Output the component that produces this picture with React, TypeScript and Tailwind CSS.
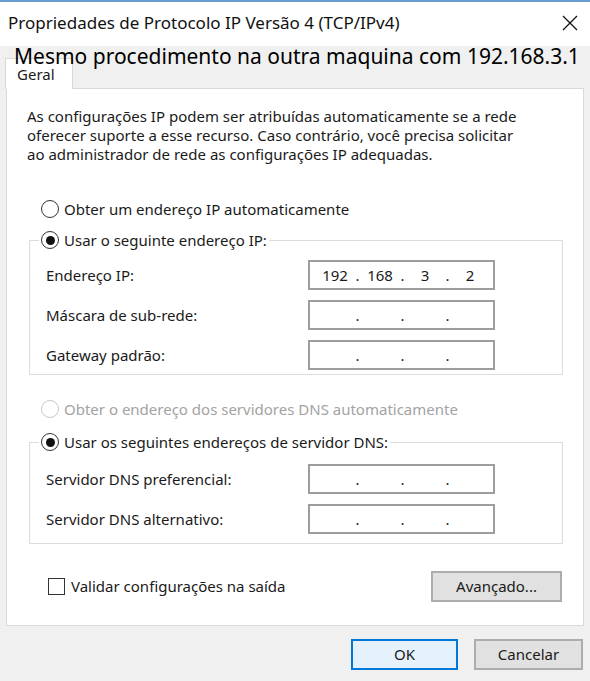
import React from 'react';

const ui = "font-['Noto_Sans','Open_Sans',sans-serif]";

const Radio = ({
	checked,
	disabled,
	label,
}: {
	checked?: boolean;
	disabled?: boolean;
	label: string;
}) => (
	<div className="flex items-center h-[20px]">
		<span
			className={`flex items-center justify-center w-[18px] h-[18px] rounded-full border-[1.5px] bg-white ${
				disabled ? 'border-[#c8c8c8]' : 'border-[#333333]'
			}`}
		>
			{checked && <span className="w-[9px] h-[9px] rounded-full bg-[#111]" />}
		</span>
		<span
			className={`ml-[5px] text-[15px] leading-[20px] ${
				disabled ? 'text-[#a3a3a3]' : 'text-[#1a1a1a]'
			}`}
		>
			{label}
		</span>
	</div>
);

const IpBox = ({ parts }: { parts?: string[] }) => {
	const p = parts || ['', '', '', ''];
	return (
		<div className="flex items-center w-[187px] h-[30px] border-2 border-[#9d9d9d] bg-white pl-[6px] text-[15px] text-[#1a1a1a]">
			{p.map((v, i) => (
				<React.Fragment key={i}>
					{i > 0 && <span className="w-[7px] text-center">.</span>}
					<span className="w-[38px] text-center">{v}</span>
				</React.Fragment>
			))}
		</div>
	);
};

const Row = ({ label, parts }: { label: string; parts?: string[] }) => (
	<div className="flex items-center h-[30px]">
		<span className="w-[278px] pl-[16px] text-[15px] text-[#1a1a1a]">{label}</span>
		<IpBox parts={parts} />
	</div>
);

const Button = ({ children, primary, className }: { children: React.ReactNode; primary?: boolean; className?: string }) => (
	<button
		className={`h-[31px] text-[15px] text-[#1a1a1a] ${
			primary
				? 'bg-[#e5f1fb] border-2 border-[#0078d7]'
				: 'bg-[#e1e1e1] border-2 border-[#adadad]'
		} ${className || ''}`}
	>
		{children}
	</button>
);

export default function App() {
	return (
		<div className={`relative w-[590px] h-[681px] overflow-hidden bg-[#f0f0f0] ${ui}`}>
			{/* title bar */}
			<div className="flex items-center justify-between h-[46px] bg-white border-t-2 border-[#6b9bd1] pl-[8px] pr-[12px]">
				<span className="text-[17px] text-[#111] pb-[2px]">
					Propriedades de Protocolo IP Versão 4 (TCP/IPv4)
				</span>
				<svg width="16" height="16" viewBox="0 0 16 16" className="mb-[2px]">
					<path d="M1 1L15 15M15 1L1 15" stroke="#111" strokeWidth="1.3" />
				</svg>
			</div>

			{/* tab */}
			<div className="pl-[5px] pt-[12px]">
				<div className="relative z-10 -mb-px w-[68px] h-[31px] bg-white border border-b-0 border-[#d9d9d9] pl-[11px] pt-[5px] text-[15px] leading-[20px] text-[#1a1a1a]">
					Geral
				</div>
			</div>

			{/* panel */}
			<div className="mx-[6px] h-[538px] bg-white border border-[#d9d9d9] pl-[20px] pt-[18px]">
				<p className="text-[15px] leading-[19px] text-[#1a1a1a]">
					As configurações IP podem ser atribuídas automaticamente se a rede
					<br />
					oferecer suporte a esse recurso. Caso contrário, você precisa solicitar
					<br />
					ao administrador de rede as configurações IP adequadas.
				</p>

				<div className="mt-[35px] pl-[14px]">
					<Radio label="Obter um endereço IP automaticamente" />
				</div>

				<fieldset className="mt-[11px] ml-[2px] w-[534px] h-[145px] border border-[#dcdcdc]">
					<legend className="ml-[9px] px-[2px] h-[20px]">
						<Radio checked label="Usar o seguinte endereço IP:" />
					</legend>
					<div className="flex flex-col gap-[10px] mt-[10px]">
						<Row label="Endereço IP:" parts={['192', '168', '3', '2']} />
						<Row label="Máscara de sub-rede:" />
						<Row label="Gateway padrão:" />
					</div>
				</fieldset>

				<div className="mt-[24px] pl-[14px]">
					<Radio disabled label="Obter o endereço dos servidores DNS automaticamente" />
				</div>

				<fieldset className="mt-[13px] ml-[2px] w-[534px] h-[112px] border border-[#dcdcdc]">
					<legend className="ml-[9px] px-[2px] h-[20px]">
						<Radio checked label="Usar os seguintes endereços de servidor DNS:" />
					</legend>
					<div className="flex flex-col gap-[10px] mt-[12px]">
						<Row label="Servidor DNS preferencial:" />
						<Row label="Servidor DNS alternativo:" />
					</div>
				</fieldset>

				<div className="flex items-center justify-between mt-[27px] w-[535px]">
					<div className="flex items-center pl-[21px]">
						<span className="w-[17px] h-[17px] border-[1.5px] border-[#333] bg-white" />
						<span className="ml-[6px] text-[15px] text-[#1a1a1a]">
							Validar configurações na saída
						</span>
					</div>
					<Button className="w-[131px]">Avançado...</Button>
				</div>
			</div>

			{/* footer buttons */}
			<div className="flex justify-end gap-[16px] pr-[7px] pt-[13px]">
				<Button primary className="w-[107px]">OK</Button>
				<Button className="w-[109px]">Cancelar</Button>
			</div>

			{/* caption laid over the screenshot */}
			<div className="absolute left-[14px] top-[42px] z-20 text-[21px] leading-[28px] text-black whitespace-nowrap">
				Mesmo procedimento na outra maquina com 192.168.3.1
			</div>
		</div>
	);
}
